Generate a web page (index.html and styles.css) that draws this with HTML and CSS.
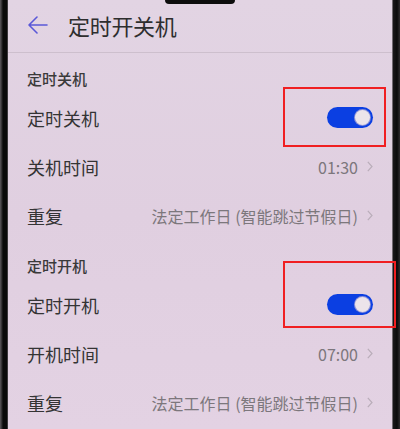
FILE: index.html
```html
<!DOCTYPE html>
<html lang="zh-CN">
<head>
    <meta charset="utf-8">
    <meta name="viewport" content="width=device-width, initial-scale=1">
    <title>定时开关机</title>
    <link rel="stylesheet" href="styles.css">
</head>
<body>
    <div class="phone">
        <div class="bezel bezel-left"></div>

        <div class="screen">
            <div class="notch"></div>

            <div class="header">
                <svg class="back" width="20" height="18" viewBox="0 0 20 18">
                    <path d="M1 9 H19 M1 9 L9 1 M1 9 L9 17" fill="none" stroke="#5a58d8" stroke-width="1.6" stroke-linecap="round" stroke-linejoin="round"/>
                </svg>
                <h1>定时开关机</h1>
            </div>

            <div class="section">定时关机</div>
            <div class="row">
                <span class="label">定时关机</span>
                <span class="switch on"><span class="knob"></span></span>
            </div>
            <div class="row">
                <span class="label">关机时间</span>
                <span class="value">01:30</span>
                <svg class="chevron" width="6" height="11" viewBox="0 0 6 11">
                    <path d="M0.8 0.8 L5 5.5 L0.8 10.2" fill="none" stroke="#b9adb9" stroke-width="1.2"/>
                </svg>
            </div>
            <div class="row">
                <span class="label">重复</span>
                <span class="value">法定工作日 (智能跳过节假日)</span>
                <svg class="chevron" width="6" height="11" viewBox="0 0 6 11">
                    <path d="M0.8 0.8 L5 5.5 L0.8 10.2" fill="none" stroke="#b9adb9" stroke-width="1.2"/>
                </svg>
            </div>

            <div class="section">定时开机</div>
            <div class="row">
                <span class="label">定时开机</span>
                <span class="switch on"><span class="knob"></span></span>
            </div>
            <div class="row">
                <span class="label">开机时间</span>
                <span class="value">07:00</span>
                <svg class="chevron" width="6" height="11" viewBox="0 0 6 11">
                    <path d="M0.8 0.8 L5 5.5 L0.8 10.2" fill="none" stroke="#b9adb9" stroke-width="1.2"/>
                </svg>
            </div>
            <div class="row">
                <span class="label">重复</span>
                <span class="value">法定工作日 (智能跳过节假日)</span>
                <svg class="chevron" width="6" height="11" viewBox="0 0 6 11">
                    <path d="M0.8 0.8 L5 5.5 L0.8 10.2" fill="none" stroke="#b9adb9" stroke-width="1.2"/>
                </svg>
            </div>
        </div>

        <div class="bezel bezel-right"></div>

        <!-- highlight frames around the two switches -->
        <div class="mark mark-off"></div>
        <div class="mark mark-on"></div>
    </div>
</body>
</html>
```

FILE: styles.css
```css
* {
    margin: 0;
    padding: 0;
    box-sizing: border-box;
}

body {
    font-family: "Noto Sans CJK SC", "Noto Sans", sans-serif;
    background: #111;
    width: 400px;
    height: 429px;
    overflow: hidden;
}

.phone {
    position: relative;
    display: flex;
    width: 400px;
    height: 429px;
}

.bezel {
    width: 8px;
    flex-shrink: 0;
}

.bezel-left {
    background: linear-gradient(to right, #5e5a5e 0, #2a282a 2px, #0a0a0a 3px, #0a0a0a 7px, #6f686f 8px);
}

.bezel-right {
    background: linear-gradient(to right, #c8bcc8 0, #1a181a 1px, #0b0b0b 5px, #2e2c2e 8px);
}

.screen {
    position: relative;
    flex: 1;
    background: linear-gradient(180deg, #e2d4e3 0%, #e0cfe0 50%, #e3d2e3 100%);
    padding: 0 19px;
    color: #303030;
}

.notch {
    position: absolute;
    top: 0;
    left: 157px;
    width: 70px;
    height: 4px;
    background: #0d0d0d;
    border-radius: 0 0 8px 8px;
}

.header {
    display: flex;
    align-items: center;
    height: 53px;
    margin: 0 -19px;
    padding: 0 0 2px 20px;
    border-bottom: 1px solid #cdbfcd;
}

.back {
    margin-right: 20px;
}

.header h1 {
    font-size: 22px;
    font-weight: 400;
    color: #2e2e2e;
    letter-spacing: -0.3px;
}

.section {
    font-size: 15px;
    font-weight: 500;
    line-height: 20px;
    padding: 16px 0 4px;
    color: #3a3a3a;
}

.row {
    display: flex;
    align-items: center;
    height: 49px;
}

.label {
    font-size: 18px;
    color: #343434;
    flex: 1;
}

.value {
    font-size: 16px;
    color: #7c777c;
    margin-right: 9px;
}

.chevron {
    flex-shrink: 0;
}

.switch {
    position: relative;
    width: 46px;
    height: 21px;
    border-radius: 11px;
    background: #0b3fe2;
}

.switch .knob {
    position: absolute;
    top: 3px;
    right: 3px;
    width: 15px;
    height: 15px;
    border-radius: 50%;
    background: #ece4ea;
    box-shadow: 0 0 0 1px #8a90d8;
}

.mark {
    position: absolute;
    border: 2px solid #f01f22;
}

.mark-off {
    left: 283px;
    top: 87px;
    width: 103px;
    height: 60px;
}

.mark-on {
    left: 283px;
    top: 261px;
    width: 113px;
    height: 67px;
}
```
